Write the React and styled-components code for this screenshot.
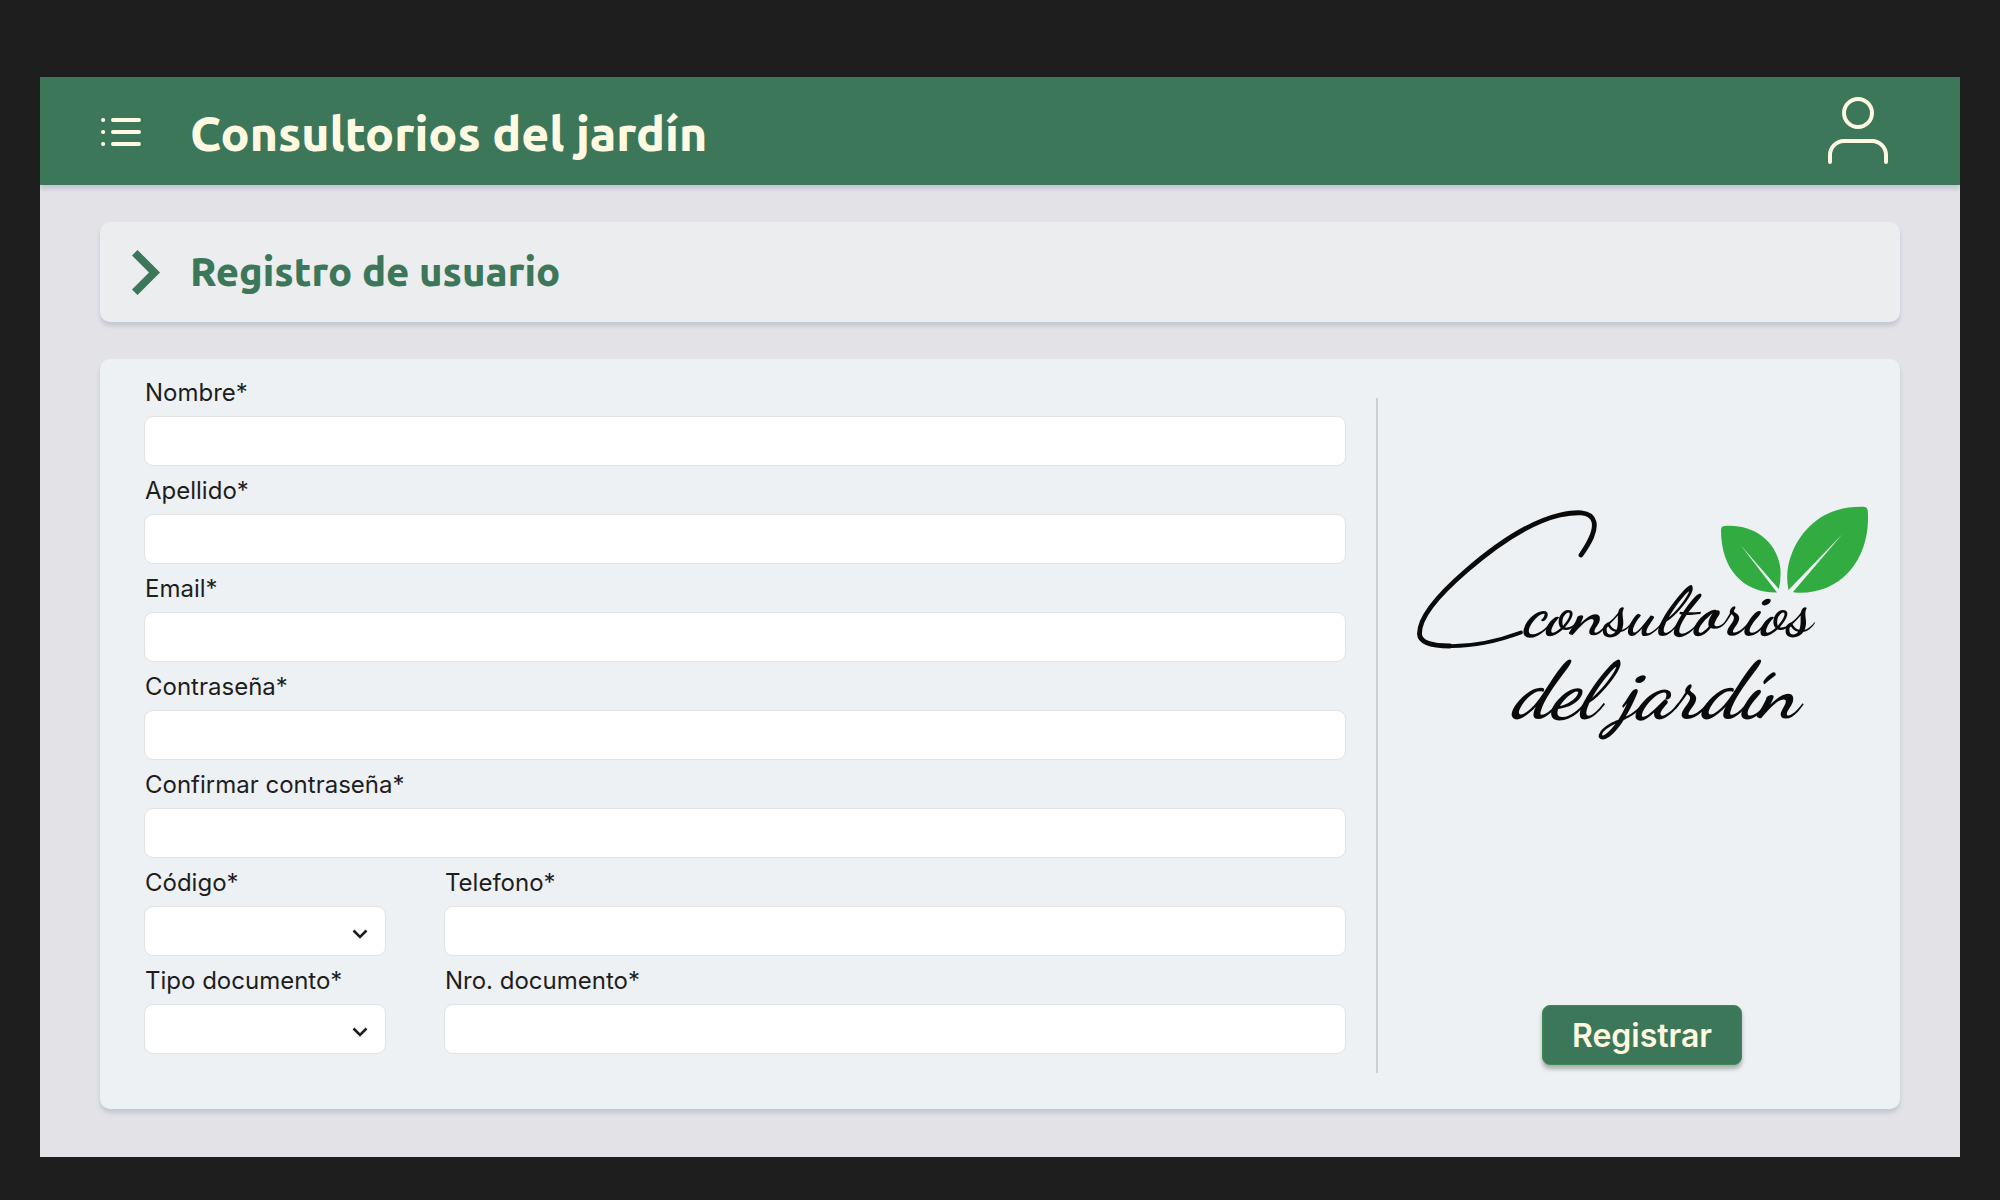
import React from "react";
import styled, { createGlobalStyle } from "styled-components";

const color = {
  backdrop: "#1e1e1e",
  page: "#e3e2e7",
  bar: "#ebedef",
  card: "#edf1f4",
  green: "#3c7759",
  cream: "#fff9e1",
  ink: "#1e1e1e",
  line: "#cbd0d6",
  shadow: "#c3c7d2",
};

const displayFont = `Ubuntu, "Noto Sans", sans-serif`;
const textFont = `Inter, "Liberation Sans", sans-serif`;
const scriptFont = `"Dancing Script", Caveat, Lato, sans-serif`;

const GlobalStyle = createGlobalStyle`
  *, *::before, *::after { box-sizing: border-box; }
  body { margin: 0; background: ${color.backdrop}; font-family: ${textFont}; color: ${color.ink}; }
`;

const Screen = styled.div`
  display: flow-root;
  overflow: clip;
  margin: 77px 40px 43px;
  background: ${color.page};
`;

const Header = styled.header`
  display: flex;
  align-items: center;
  height: 108px;
  padding: 2px 72px 0 60px;
  background: ${color.green};
  box-shadow: 0 4px 4px ${color.shadow};
  color: ${color.cream};
`;

const IconButton = styled.button`
  display: flex;
  padding: 0;
  border: 0;
  background: none;
  color: inherit;
  cursor: pointer;
`;

const Brand = styled.h1`
  flex: 1;
  margin: 0 0 0 48px;
  padding-top: 2px;
  font: 800 48px/56px ${displayFont};
`;

const Content = styled.main`
  display: flex;
  flex-direction: column;
  gap: 37px;
  padding: 37px 60px 48px;
`;

const Panel = styled.section`
  border-radius: 10px;
  background: ${(p) => p.$fill};
  box-shadow: 0 4px 4px ${color.shadow};
`;

const TitleBar = styled(Panel)`
  display: flex;
  align-items: center;
  gap: 30px;
  height: 100px;
  padding: 0 32px;
  color: ${color.green};
`;

const Title = styled.h2`
  margin: 0;
  font: 800 40px/48px ${displayFont};
`;

const Form = styled.form`
  display: grid;
  grid-template-columns: minmax(0, 1fr) 2px 522px;
`;

const Fields = styled.div`
  display: flex;
  flex-direction: column;
  gap: 10px;
  padding: 19px 30px 55px 44px;
`;

const Pair = styled.div`
  display: grid;
  grid-template-columns: 242px minmax(0, 1fr);
  gap: 58px;
`;

const FieldBox = styled.div`
  display: flex;
  flex-direction: column;
  gap: 9px;
`;

const Label = styled.label`
  align-self: flex-start;
  padding-left: 1px;
  font-size: 24px;
  line-height: 29px;
`;

const Input = styled.input`
  width: 100%;
  height: 50px;
  padding: 0 16px;
  border: 1px solid #e0e2e4;
  border-radius: 9px;
  background: #fff;
  color: inherit;
  font: 400 24px/29px ${textFont};
`;

const Select = styled(Input)`
  appearance: none;
`;

const SelectWrap = styled.div`
  position: relative;
  display: flex;
`;

const SelectIcon = styled.svg`
  position: absolute;
  top: 22px;
  right: 18px;
  pointer-events: none;
`;

const Divider = styled.div`
  margin: 39px 0 36px;
  background: ${color.line};
`;

const Aside = styled.div`
  display: flex;
  flex-direction: column;
  align-items: center;
  justify-content: space-between;
  padding: 141px 26px 44px 32px;
`;

const LogoArt = styled.svg`
  width: 100%;
  height: auto;
  overflow: visible;
`;

const LogoText = styled.text`
  fill: #0a0a0a;
  font: italic 700 ${(p) => p.$size}px ${scriptFont};
`;

const Submit = styled.button`
  width: 200px;
  height: 60px;
  padding: 0;
  border: 1px solid #3d8a52;
  border-radius: 8px;
  background: ${color.green};
  box-shadow: 0 4px 4px rgba(0, 0, 0, 0.28);
  color: ${color.cream};
  font: 600 32px/39px ${textFont};
  cursor: pointer;
`;

function MenuIcon() {
  return (
    <svg width="42" height="28" viewBox="0 0 42 28" fill="none" stroke="currentColor" strokeWidth="4" strokeLinecap="round" aria-hidden="true">
      <path d="M13 2H39M13 14H39M13 26H39" />
      <path d="M3 2h.2M3 14h.2M3 26h.2" />
    </svg>
  );
}

function UserIcon() {
  return (
    <svg width="64" height="70" viewBox="0 0 64 70" fill="none" stroke="currentColor" strokeWidth="4" strokeLinecap="round" aria-hidden="true">
      <circle cx="34" cy="16" r="14" />
      <path d="M6 65V58A14 14 0 0 1 20 44H48A14 14 0 0 1 62 58V65" />
    </svg>
  );
}

function ChevronIcon() {
  return (
    <svg width="28" height="45" viewBox="0 0 28 45" fill="currentColor" aria-hidden="true">
      <path d="M5.5 0L28 22.5L5.5 45L0 39.5L17 22.5L0 5.5Z" />
    </svg>
  );
}

function Logo() {
  return (
    <LogoArt viewBox="0 0 464 270" role="img" aria-label="Consultorios del jardín">
      <g fill="none" stroke="#0a0a0a" strokeLinecap="round">
        <path strokeWidth="4.8" d="M171 55C180 42 186 31 184 22C181 10 165 12 150 15C120 22 86 45 56 71C34 90 9 115 9.500 134C10 143 23 146 40 146" />
        <path strokeWidth="3.800" d="M36 146C62 147 88 141 111 132.500" />
      </g>
      <path fill="#32ac41" d="M315 26C343 24 368 41 370.500 70Q371 80 368.800 89L330.500 45L367 92.500C334 93 311 70 311 30Q311 26 315 26Z" />
      <path fill="#32ac41" d="M453 6.800Q457.500 6.800 457.800 11C461 58 432 94 388 92.800Q384 92.800 383 92L432.500 34L378.500 90C376 78 377 65 382 53C394 24 418 6 453 6.800Z" />
      <LogoText $size={68} x="113" y="134">consultorios</LogoText>
      <LogoText $size={80} x="102" y="217">del jardín</LogoText>
    </LogoArt>
  );
}

function Field({ id, label, type = "text" }) {
  return (
    <FieldBox>
      <Label htmlFor={id}>{label}</Label>
      <Input id={id} name={id} type={type} />
    </FieldBox>
  );
}

function SelectField({ id, label }) {
  return (
    <FieldBox>
      <Label htmlFor={id}>{label}</Label>
      <SelectWrap>
        <Select as="select" id={id} name={id} />
        <SelectIcon width="16" height="12" viewBox="0 0 16 12" fill="none" stroke={color.ink} strokeWidth="2.600" aria-hidden="true">
          <path d="M1.500 2.500L8 9L14.500 2.500" />
        </SelectIcon>
      </SelectWrap>
    </FieldBox>
  );
}

export default function App() {
  return (
    <>
      <GlobalStyle />
      <Screen>
        <Header>
          <IconButton type="button" aria-label="Menú">
            <MenuIcon />
          </IconButton>
          <Brand>Consultorios del jardín</Brand>
          <IconButton type="button" aria-label="Cuenta">
            <UserIcon />
          </IconButton>
        </Header>
        <Content>
          <TitleBar $fill={color.bar}>
            <ChevronIcon />
            <Title>Registro de usuario</Title>
          </TitleBar>
          <Panel $fill={color.card}>
            <Form onSubmit={(e) => e.preventDefault()}>
              <Fields>
                <Field id="nombre" label="Nombre*" />
                <Field id="apellido" label="Apellido*" />
                <Field id="email" label="Email*" type="email" />
                <Field id="clave" label="Contraseña*" type="password" />
                <Field id="confirmar" label="Confirmar contraseña*" type="password" />
                <Pair>
                  <SelectField id="codigo" label="Código*" />
                  <Field id="telefono" label="Telefono*" type="tel" />
                </Pair>
                <Pair>
                  <SelectField id="tipo" label="Tipo documento*" />
                  <Field id="numero" label="Nro. documento*" />
                </Pair>
              </Fields>
              <Divider />
              <Aside>
                <Logo />
                <Submit type="submit">Registrar</Submit>
              </Aside>
            </Form>
          </Panel>
        </Content>
      </Screen>
    </>
  );
}
